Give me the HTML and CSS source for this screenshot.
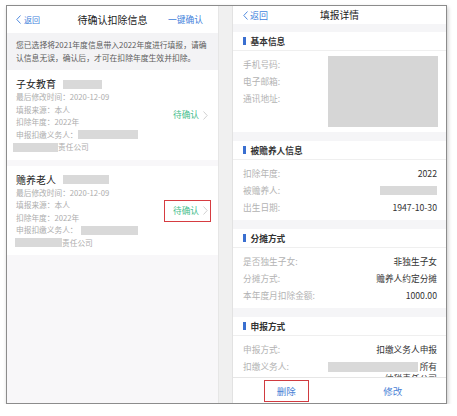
FILE: index.html
```html
<!DOCTYPE html>
<html lang="zh-CN">
<head>
<meta charset="utf-8">
<link rel="stylesheet" href="styles.css">
</head>
<body>
<div class="frame">
  <div class="pane left">
    <div class="nav">
      <span class="back"><svg class="chev" width="5" height="9" viewBox="0 0 5 9"><polyline points="4.5,0.5 0.8,4.5 4.5,8.5" fill="none" stroke="#3f7fdc" stroke-width="0.9"/></svg>返回</span>
      <span class="nav-title">待确认扣除信息</span>
      <span class="nav-action">一键确认</span>
    </div>
    <div class="notice">您已选择将2021年度信息带入2022年度进行填报，请确<br>认信息无误，确认后，才可在扣除年度生效并扣除。</div>
    <div class="card">
      <div class="card-info">
        <div class="card-title">子女教育<span class="mask m-t1"></span></div>
        <div class="line">最后修改时间：2020-12-09</div>
        <div class="line">填报来源：本人</div>
        <div class="line">扣除年度：2022年</div>
        <div class="line">申报扣缴义务人：<span class="mask m-a1"></span></div>
        <div class="line"><span class="mask m-b1"></span>责任公司</div>
      </div>
      <div class="status">待确认<svg class="schev" width="5" height="9" viewBox="0 0 5 9"><polyline points="0.5,0.5 4.2,4.5 0.5,8.5" fill="none" stroke="#c4c4c4" stroke-width="0.8"/></svg></div>
    </div>
    <div class="card">
      <div class="card-info">
        <div class="card-title">赡养老人<span class="mask m-t2"></span></div>
        <div class="line">最后修改时间：2020-12-09</div>
        <div class="line">填报来源：本人</div>
        <div class="line">扣除年度：2022年</div>
        <div class="line">申报扣缴义务人：<span class="mask m-a2"></span></div>
        <div class="line"><span class="mask m-b2"></span>责任公司</div>
      </div>
      <div class="status marked">待确认<svg class="schev" width="5" height="9" viewBox="0 0 5 9"><polyline points="0.5,0.5 4.2,4.5 0.5,8.5" fill="none" stroke="#c4c4c4" stroke-width="0.8"/></svg></div>
    </div>
  </div>
  <div class="divider"></div>
  <div class="pane right">
    <div class="r-nav">
      <span class="back r-back"><svg class="chev" width="5" height="9" viewBox="0 0 5 9"><polyline points="4.5,0.5 0.8,4.5 4.5,8.5" fill="none" stroke="#3f7fdc" stroke-width="0.9"/></svg>返回</span>
      <span class="r-title">填报详情</span>
      <span></span>
    </div>
    <div class="scroll">
      <div class="section">
        <div class="sec-head">基本信息</div>
        <div class="sec-body basic">
          <div class="labels">
            <div class="row"><span class="label">手机号码:</span></div>
            <div class="row"><span class="label">电子邮箱:</span></div>
            <div class="row"><span class="label">通讯地址:</span></div>
          </div>
          <div class="mask big"></div>
        </div>
      </div>
      <div class="section">
        <div class="sec-head">被赡养人信息</div>
        <div class="sec-body">
          <div class="row"><span class="label">扣除年度:</span><span class="value">2022</span></div>
          <div class="row"><span class="label">被赡养人:</span><span class="mask m-name"></span></div>
          <div class="row"><span class="label">出生日期:</span><span class="value">1947-10-30</span></div>
        </div>
      </div>
      <div class="section">
        <div class="sec-head">分摊方式</div>
        <div class="sec-body">
          <div class="row"><span class="label">是否独生子女:</span><span class="value">非独生子女</span></div>
          <div class="row"><span class="label">分摊方式:</span><span class="value">赡养人约定分摊</span></div>
          <div class="row"><span class="label">本年度月扣除金额:</span><span class="value">1000.00</span></div>
        </div>
      </div>
      <div class="section">
        <div class="sec-head">申报方式</div>
        <div class="sec-body">
          <div class="row"><span class="label">申报方式:</span><span class="value">扣缴义务人申报</span></div>
          <div class="row tall"><span class="label">扣缴义务人:</span><span class="value multi"><span class="mask m-agent"></span>所有<br>纳税责任公司</span></div>
        </div>
      </div>
    </div>
    <div class="footer">
      <div class="btn"><span class="btn-text marked-red">删除</span></div>
      <div class="btn"><span class="btn-text">修改</span></div>
    </div>
  </div>
</div>
</body>
</html>
```

FILE: styles.css
```css
* { box-sizing: border-box; margin: 0; padding: 0; }
body {
  background: #ffffff;
  font-family: "Noto Sans CJK SC", "Noto Sans", sans-serif;
}
.frame {
  margin: 5px 0 0 6px;
  width: 441px;
  height: 399px;
  border: 1px solid #8c8c8c;
  display: flex;
  overflow: hidden;
  box-shadow: 1px 2px 4px rgba(0, 0, 0, 0.22);
}
.pane { display: flex; flex-direction: column; }
.left { width: 211px; background: #f8f7f9; }
.divider { width: 15px; background: #f0f0f0; border-left: 1px solid #e6e6e6; border-right: 1px solid #e2e2e2; }
.right { width: 213px; background: #f5f5f7; }

/* left nav */
.nav {
  height: 27px;
  background: #fff;
  display: grid;
  grid-template-columns: 1fr auto 1fr;
  align-items: center;
  padding: 0 12px;
}
.back {
  display: flex;
  align-items: center;
  gap: 3px;
  color: #3f7fdc;
  font-size: 8px;
  margin-left: -3px;
}
.nav-title { font-size: 10px; color: #222; }
.nav-action { justify-self: end; color: #3f7fdc; font-size: 8.75px; margin-right: 3px; }

.notice {
  height: 37px;
  background: #f3f3f5;
  padding: 5px 9px;
  font-size: 7.8px;
  line-height: 13px;
  color: #5c5c5c;
  white-space: nowrap;
}
.card {
  background: #fff;
  display: flex;
  align-items: center;
  padding: 7px 7px 6px 9px;
  margin-bottom: 6px;
}
.card-title {
  font-size: 10px;
  line-height: 14px;
  color: #222;
  display: flex;
  align-items: center;
}
.mask { display: inline-block; background: #d9d9d9; height: 9px; }
.m-t1 { width: 39px; margin-left: 7px; }
.m-t2 { width: 46px; margin-left: 7px; }
.m-a1 { width: 60px; }
.m-a2 { width: 57px; margin-left: 3px; }
.m-b1 { width: 45px; margin-left: -3px; }
.m-b2 { width: 47px; margin-left: -1px; }
.line {
  font-size: 7.7px;
  line-height: 12.5px;
  height: 12.5px;
  color: #adadad;
  white-space: nowrap;
  display: flex;
  align-items: center;
}
.status {
  margin-left: auto;
  color: #3fbd8c;
  font-size: 8.7px;
  line-height: 10px;
  display: flex;
  align-items: center;
  gap: 4px;
  padding: 5px 2px 5px 8px;
  border: 1.5px solid transparent;
}
.status.marked { border-color: #d63c41; }

/* right */
.r-nav {
  height: 18px;
  background: #fff;
  display: grid;
  grid-template-columns: 1fr auto 1fr;
  align-items: center;
  padding: 0 10px;
}
.r-back { font-size: 9px; margin-left: 0; gap: 2px; }
.r-title { font-size: 9.75px; color: #222; }
.scroll { flex: 1; overflow: hidden; padding-top: 8px; }
.section { background: #fff; margin-bottom: 9px; }
.sec-head {
  height: 19px;
  display: flex;
  align-items: center;
  padding-left: 10px;
  font-weight: bold;
  font-size: 8.7px;
  color: #333;
  border-bottom: 1px solid #efefef;
}
.sec-head::before {
  content: "";
  width: 2.5px;
  height: 8px;
  background: #3a6fd0;
  margin-right: 5px;
}
.sec-body { padding: 5px 9px 4px 10px; }
.sec-body.basic { display: flex; justify-content: space-between; padding-bottom: 5px; }
.row {
  display: flex;
  justify-content: space-between;
  align-items: center;
  height: 17px;
  font-size: 8.7px;
}
.label { color: #b3b3b3; }
.value { color: #333; }
.big { width: 110px; height: 71px; background: #d6d6d6; margin-right: -1px; }
.m-name { width: 57px; height: 9px; }
.row.tall { align-items: flex-start; height: 30px; }
.row.tall .label { line-height: 17px; }
.value.multi { text-align: right; line-height: 12px; padding-top: 2.5px; white-space: nowrap; }
.m-agent { width: 90px; height: 10px; vertical-align: middle; margin-right: 2px; }

.footer {
  height: 26px;
  background: #fff;
  border-top: 1px solid #e6e6e6;
  display: flex;
}
.btn { flex: 1; display: flex; align-items: center; justify-content: center; }
.btn-text { font-size: 9.5px; line-height: 12px; color: #4a82d6; padding: 4px 12px; border: 1.5px solid transparent; }
.btn-text.marked-red { border-color: #d03b40; }
```
